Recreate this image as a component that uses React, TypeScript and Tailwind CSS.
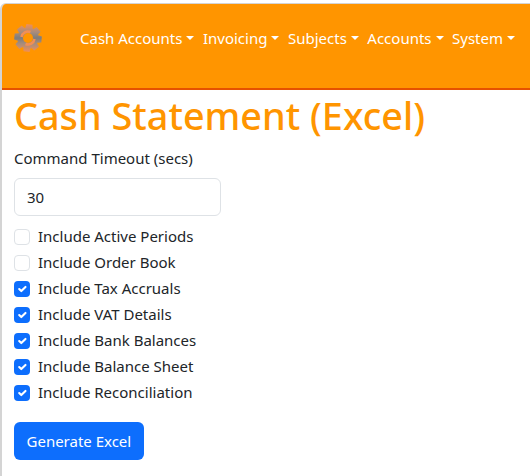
const font = "font-['Noto_Sans','Open_Sans',sans-serif]"

const navItems = ['Cash Accounts', 'Invoicing', 'Subjects', 'Accounts', 'System']

const options = [
  { label: 'Include Active Periods', checked: false },
  { label: 'Include Order Book', checked: false },
  { label: 'Include Tax Accruals', checked: true },
  { label: 'Include VAT Details', checked: true },
  { label: 'Include Bank Balances', checked: true },
  { label: 'Include Balance Sheet', checked: true },
  { label: 'Include Reconciliation', checked: true },
]

// 8 tooth cog outline around the centre of a 28 box
function cogPath() {
  const pts: string[] = []
  for (let i = 0; i < 8; i++) {
    const a = ((i * 45 + 6 - 90) * Math.PI) / 180
    const at = (r: number, d: number) => {
      const x = 14 + r * Math.cos(a + d)
      const y = 14 + r * Math.sin(a + d)
      return `${x.toFixed(2)} ${y.toFixed(2)}`
    }
    pts.push(at(10.5, -0.36), at(14, -0.22), at(14, 0.22), at(10.5, 0.36))
  }
  return `M${pts.join('L')}Z`
}

function Logo() {
  return (
    <svg width="28" height="28" viewBox="0 0 28 28" className="mt-[3px] shrink-0" aria-hidden="true">
      <defs>
        <linearGradient id="cog" gradientUnits="userSpaceOnUse" x1="14" y1="0" x2="14" y2="28">
          <stop offset="0" stopColor="#f28f55" />
          <stop offset="0.3" stopColor="#a78c7c" />
          <stop offset="0.5" stopColor="#7f7d7b" />
          <stop offset="0.7" stopColor="#a78c7c" />
          <stop offset="1" stopColor="#f28f55" />
        </linearGradient>
      </defs>
      <path d={cogPath()} fill="url(#cog)" />
      <circle cx="14" cy="14" r="5" fill="#ff9500" />
      <path d="M7.5 13a6.5 6.5 0 0 1 9-5" fill="none" stroke="#f28f55" strokeWidth="2.5" />
      <path d="M20.5 15a6.5 6.5 0 0 1-9 5" fill="none" stroke="#f28f55" strokeWidth="2.5" />
    </svg>
  )
}

function Checkbox({ label, checked }: { label: string; checked: boolean }) {
  return (
    <label className="flex h-[26px] items-center">
      {checked ? (
        <span className="flex h-4 w-4 items-center justify-center rounded-[4px] bg-[#0d6efd]">
          <svg width="14" height="14" viewBox="0 0 20 20" aria-hidden="true">
            <path d="m6 10 3 3 6-6" fill="none" stroke="#fff" strokeWidth="3" strokeLinecap="round" strokeLinejoin="round" />
          </svg>
        </span>
      ) : (
        <span className="h-4 w-4 rounded-[4px] border border-[#dee2e6] bg-white" />
      )}
      <span className="ml-2 pb-[2px] text-[15px] text-[#212529]">{label}</span>
    </label>
  )
}

export default function App() {
  return (
    <div className={`h-[476px] w-[530px] overflow-hidden bg-white pt-[3px] ${font}`}>
      <div className="h-full overflow-hidden rounded-tl-[6px] border-t border-l-2 border-[#d4d4d4]">
        <nav className="flex h-[86px] border-b-2 border-[#e65100] bg-[#ff9500] pl-[12px] pt-[17px]">
          <Logo />
          <ul className="ml-[38px] flex h-[34px] items-center gap-[8.5px] text-[15px] whitespace-nowrap text-white">
            {navItems.map((item) => (
              <li key={item} className="flex items-center">
                {item}
                <span className="ml-[4px] h-0 w-0 border-x-[4.8px] border-t-[4.8px] border-x-transparent border-t-white" />
              </li>
            ))}
          </ul>
        </nav>
        <main className="px-[12px]">
          <h1 className="mt-[2px] text-[37.8px] leading-[48px] font-medium text-[#ff9500]">Cash Statement (Excel)</h1>
          <div className="mt-[6px] text-[15px] leading-6 text-[#212529]">Command Timeout (secs)</div>
          <div className="mt-[8px] flex h-[38px] w-[207px] items-center rounded-[6px] border border-[#dee2e6] px-3 text-[15px] text-[#212529]">30</div>
          <div className="mt-[8px]">
            {options.map((o) => (
              <Checkbox key={o.label} label={o.label} checked={o.checked} />
            ))}
          </div>
          <button className="mt-[16px] h-[38px] rounded-[6px] bg-[#0d6efd] px-[12.5px] text-[15px] text-white">Generate Excel</button>
        </main>
      </div>
    </div>
  )
}
